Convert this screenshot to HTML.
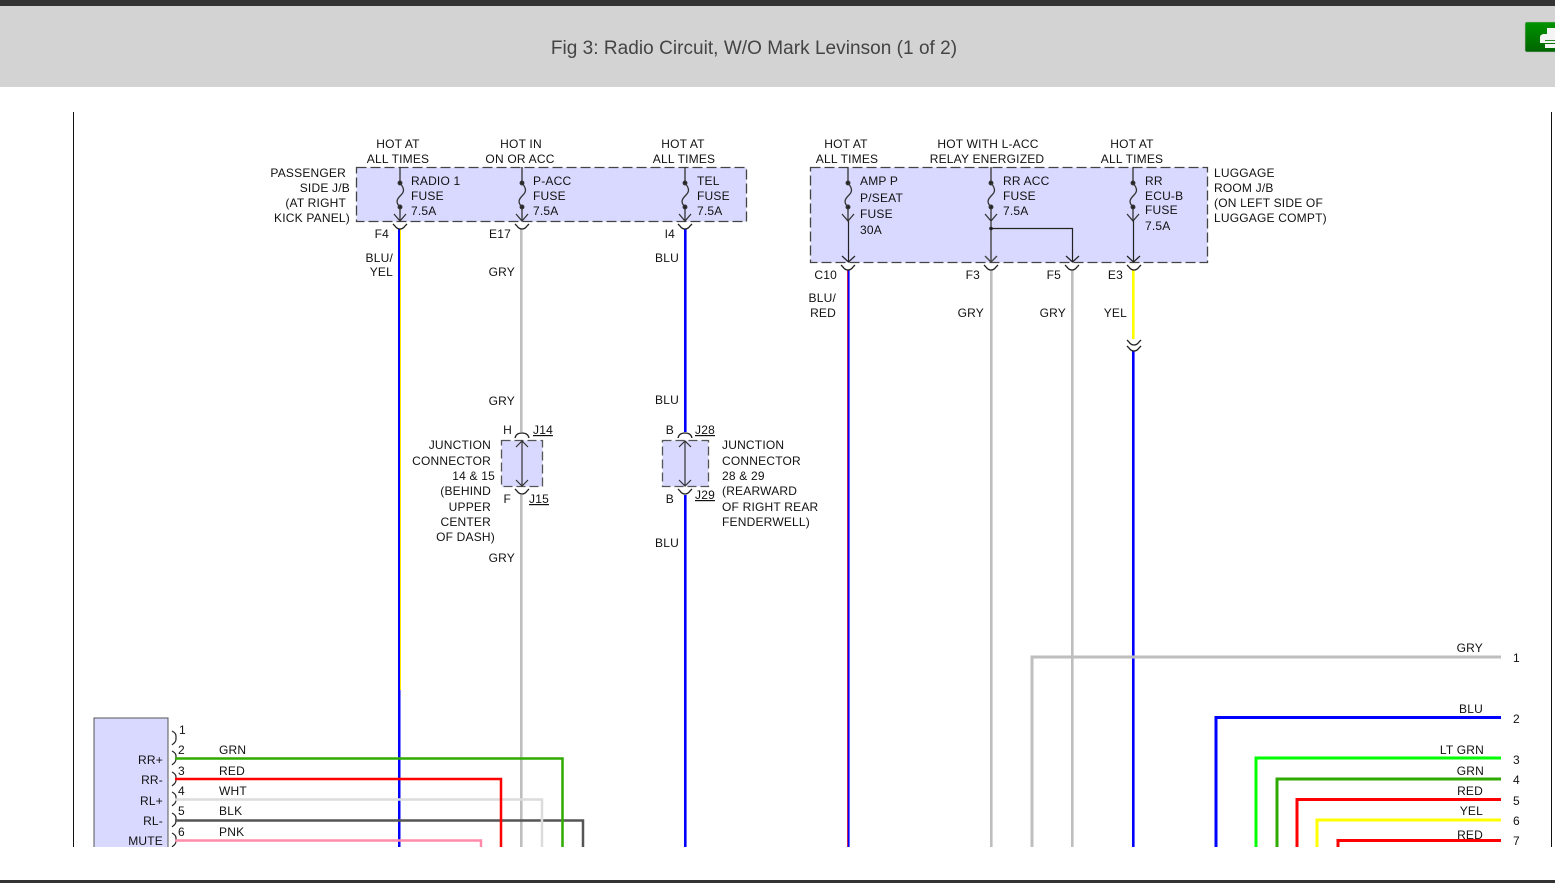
<!DOCTYPE html>
<html>
<head>
<meta charset="utf-8">
<style>
html,body{margin:0;padding:0;background:#fff;width:1555px;height:883px;overflow:hidden}
svg{position:absolute;left:0;top:0}
text{font-family:"Liberation Sans",sans-serif;font-size:12px;fill:#111;letter-spacing:.2px}
.m{text-anchor:middle}
.e{text-anchor:end}
</style>
</head>
<body>
<svg width="1555" height="883" viewBox="0 0 1555 883">
<defs>
<linearGradient id="g" x1="0" y1="0" x2="0" y2="1"><stop offset="0" stop-color="#009400"/><stop offset="1" stop-color="#006400"/></linearGradient>
<clipPath id="c"><rect x="0" y="100" width="1555" height="747"/></clipPath>
<g id="fuse" fill="none" stroke="#333" stroke-width="1.300">
<path d="M0 167V183M0 207V221"/>
<circle cx="0" cy="183" r="1.800" fill="#222"/><circle cx="0" cy="207" r="1.800" fill="#222"/>
<path d="M0 183C5 189 4 192 1 195C-3 199 -5 202 0 207"/>
<path d="M-6 214L0 221L6 214"/>
</g>
<path id="cup" d="M-7 0L-5 2Q-3 5 0 5Q3 5 5 2L7 0" fill="none" stroke="#222" stroke-width="1.300"/>
<path id="cap" d="M-7 5Q-6 0 0 0Q6 0 7 5" fill="none" stroke="#222" stroke-width="1.300"/>
<path id="pin" d="M0 0Q4 2 4 5V8Q4 11 1 13L0 14" fill="none" stroke="#222" stroke-width="1.200"/>
</defs>

<rect x="0" y="0" width="1555" height="6" fill="#333"/>
<rect x="0" y="6" width="1555" height="81" fill="#d3d3d3"/>
<text x="754" y="54" class="m" style="font-size:19px;fill:#444;letter-spacing:.04px">Fig 3: Radio Circuit, W/O Mark Levinson (1 of 2)</text>
<rect x="1525" y="22" width="34" height="30" rx="2" fill="url(#g)" stroke="#bbb" stroke-width="0.6"/>
<path d="M1547 28H1555V34H1547ZM1543 34H1555V43H1540V37Q1540 35 1543 34ZM1545 44H1555V48H1545Z" fill="#f4f4f4"/>
<rect x="1545" y="40" width="10" height="1" fill="#2a8a2a"/>
<rect x="0" y="880" width="1555" height="3" fill="#333"/>

<g clip-path="url(#c)">
<rect x="73" y="112" width="1" height="735" fill="#111"/>
<rect x="1551" y="112" width="1" height="735" fill="#111"/>

<rect x="356.500" y="167.500" width="390" height="54" fill="#d9d9ff" stroke="#444" stroke-width="1.300" stroke-dasharray="10 4"/>
<rect x="810.500" y="167.500" width="397" height="95" fill="#d9d9ff" stroke="#444" stroke-width="1.300" stroke-dasharray="10 4"/>
<rect x="501.500" y="440.500" width="41" height="46" fill="#d9d9ff" stroke="#555" stroke-width="1.300" stroke-dasharray="9 4"/>
<rect x="662.500" y="440.500" width="46" height="46" fill="#d9d9ff" stroke="#555" stroke-width="1.300" stroke-dasharray="9 4"/>
<rect x="94" y="718" width="74" height="140" fill="#d9d9ff" stroke="#555" stroke-width="1"/>

<!-- vertical wires -->
<rect x="398" y="229" width="2.500" height="618" fill="#0000ff"/>
<rect x="400" y="229" width="1" height="461" fill="#ffe800"/>
<rect x="520" y="229" width="2.600" height="203" fill="#bebebe"/>
<rect x="520" y="495" width="2.600" height="352" fill="#bebebe"/>
<rect x="684" y="229" width="2.600" height="203" fill="#0000ff"/>
<rect x="684" y="495" width="2.600" height="352" fill="#0000ff"/>
<rect x="847" y="270" width="2.600" height="577" fill="#0000ff"/>
<rect x="847" y="270" width="1" height="577" fill="#c8205c"/>
<rect x="990" y="270" width="2.600" height="577" fill="#bebebe"/>
<rect x="1071" y="270" width="2.600" height="577" fill="#bebebe"/>
<rect x="1132" y="270" width="2.600" height="69" fill="#ffff00"/>
<rect x="1132" y="351" width="2.600" height="496" fill="#0000ff"/>

<!-- fuses -->
<use href="#fuse" x="400"/>
<use href="#fuse" x="522"/>
<use href="#fuse" x="685"/>
<use href="#fuse" x="848"/>
<use href="#fuse" x="991"/>
<use href="#fuse" x="1133"/>
<g fill="none" stroke="#222" stroke-width="1.200">
<path d="M848.500 221V262M842 256L848.500 262L855 256"/>
<path d="M991 221V262M985 256L991 262L997 256" stroke="#444" stroke-width="1.400"/>
<path d="M1133.500 221V262M1127 256L1133.500 262L1140 256"/>
<path d="M991 228.500H1072.500V262M1066 256L1072.500 262L1079 256"/>
<path d="M522 441V486M516 447L522 441L528 447M516 480L522 486L528 480" stroke="#333"/>
<path d="M685 441V486M679 447L685 441L691 447M679 480L685 486L691 480" stroke="#333"/>
</g>
<circle cx="991" cy="228.500" r="1.800" fill="#222"/>

<!-- connector cups -->
<use href="#cup" x="400" y="224"/>
<use href="#cup" x="522" y="224"/>
<use href="#cup" x="685" y="224"/>
<use href="#cup" x="848" y="265"/>
<use href="#cup" x="991" y="265"/>
<use href="#cup" x="1072" y="265"/>
<use href="#cup" x="1134" y="265"/>
<use href="#cup" x="1134" y="340"/>
<use href="#cup" x="1134" y="346"/>
<use href="#cap" x="522" y="433"/>
<use href="#cap" x="685" y="433"/>
<use href="#cup" x="522" y="489"/>
<use href="#cup" x="685" y="489"/>
<use href="#pin" x="172" y="731"/>
<use href="#pin" x="172" y="751"/>
<use href="#pin" x="172" y="772"/>
<use href="#pin" x="172" y="792"/>
<use href="#pin" x="172" y="813"/>
<use href="#pin" x="172" y="833"/>

<!-- left harness -->
<g fill="none" stroke-width="2.500">
<path d="M175 840.500H481V847" stroke="#ff8aaa"/>
<path d="M175 820.500H583V847" stroke="#555"/>
<path d="M175 799.500H542V847" stroke="#dcdcdc"/>
<path d="M175 779H501V847" stroke="#ff0000"/>
<path d="M175 758.500H562.500V847" stroke="#2eaa00"/>
</g>

<!-- right harness -->
<g fill="none" stroke-width="3">
<path d="M1032 847V657H1501" stroke="#bebebe"/>
<path d="M1216 847V717.500H1501" stroke="#0000ff"/>
<path d="M1256 847V758H1501" stroke="#00ff00"/>
<path d="M1277 847V779H1501" stroke="#2eaa00"/>
<path d="M1297 847V799.500H1501" stroke="#ff0000"/>
<path d="M1317 847V820H1501" stroke="#ffff00"/>
<path d="M1338 847V840.500H1501" stroke="#ff0000"/>
</g>

<!-- labels -->
<text x="398" y="148" class="m">HOT AT</text><text x="398" y="163" class="m">ALL TIMES</text>
<text x="521" y="148" class="m">HOT IN</text><text x="520" y="163" class="m">ON OR ACC</text>
<text x="683" y="148" class="m">HOT AT</text><text x="684" y="163" class="m">ALL TIMES</text>
<text x="846" y="148" class="m">HOT AT</text><text x="847" y="163" class="m">ALL TIMES</text>
<text x="988" y="148" class="m">HOT WITH L-ACC</text><text x="987" y="163" class="m">RELAY ENERGIZED</text>
<text x="1132" y="148" class="m">HOT AT</text><text x="1132" y="163" class="m">ALL TIMES</text>

<text x="346" y="177" class="e">PASSENGER</text>
<text x="350" y="192" class="e">SIDE J/B</text>
<text x="346" y="207" class="e">(AT RIGHT</text>
<text x="350" y="222" class="e">KICK PANEL)</text>

<text x="411" y="185">RADIO 1</text><text x="411" y="200">FUSE</text><text x="411" y="215">7.5A</text>
<text x="533" y="185">P-ACC</text><text x="533" y="200">FUSE</text><text x="533" y="215">7.5A</text>
<text x="697" y="185">TEL</text><text x="697" y="200">FUSE</text><text x="697" y="215">7.5A</text>
<text x="860" y="185">AMP P</text><text x="860" y="202">P/SEAT</text><text x="860" y="218">FUSE</text><text x="860" y="234">30A</text>
<text x="1003" y="185">RR ACC</text><text x="1003" y="200">FUSE</text><text x="1003" y="215">7.5A</text>
<text x="1145" y="185">RR</text><text x="1145" y="200">ECU-B</text><text x="1145" y="214">FUSE</text><text x="1145" y="230">7.5A</text>

<text x="1214" y="177">LUGGAGE</text><text x="1214" y="192">ROOM J/B</text><text x="1214" y="207">(ON LEFT SIDE OF</text><text x="1214" y="222">LUGGAGE COMPT)</text>

<text x="389" y="238" class="e">F4</text>
<text x="511" y="238" class="e">E17</text>
<text x="675" y="238" class="e">I4</text>
<text x="837" y="279" class="e">C10</text>
<text x="980" y="279" class="e">F3</text>
<text x="1061" y="279" class="e">F5</text>
<text x="1123" y="279" class="e">E3</text>

<text x="393" y="262" class="e">BLU/</text><text x="393" y="276" class="e">YEL</text>
<text x="515" y="276" class="e">GRY</text>
<text x="679" y="262" class="e">BLU</text>
<text x="836" y="302" class="e">BLU/</text><text x="836" y="317" class="e">RED</text>
<text x="984" y="317" class="e">GRY</text>
<text x="1066" y="317" class="e">GRY</text>
<text x="1127" y="317" class="e">YEL</text>

<text x="515" y="405" class="e">GRY</text>
<text x="679" y="404" class="e">BLU</text>
<text x="515" y="562" class="e">GRY</text>
<text x="679" y="547" class="e">BLU</text>

<text x="512" y="434" class="e">H</text>
<text x="533" y="434" text-decoration="underline">J14</text>
<text x="511" y="503" class="e">F</text>
<text x="529" y="503" text-decoration="underline">J15</text>
<text x="674" y="434" class="e">B</text>
<text x="695" y="434" text-decoration="underline">J28</text>
<text x="674" y="503" class="e">B</text>
<text x="695" y="499" text-decoration="underline">J29</text>

<text x="491" y="449" class="e">JUNCTION</text>
<text x="491" y="465" class="e">CONNECTOR</text>
<text x="495" y="480" class="e">14 &amp; 15</text>
<text x="491" y="495" class="e">(BEHIND</text>
<text x="491" y="511" class="e">UPPER</text>
<text x="491" y="526" class="e">CENTER</text>
<text x="495" y="541" class="e">OF DASH)</text>

<text x="722" y="449">JUNCTION</text>
<text x="722" y="465">CONNECTOR</text>
<text x="722" y="480">28 &amp; 29</text>
<text x="722" y="495">(REARWARD</text>
<text x="722" y="511">OF RIGHT REAR</text>
<text x="722" y="526">FENDERWELL)</text>

<text x="163" y="764" class="e">RR+</text>
<text x="163" y="784" class="e">RR-</text>
<text x="163" y="805" class="e">RL+</text>
<text x="163" y="825" class="e">RL-</text>
<text x="163" y="845" class="e">MUTE</text>

<text x="179" y="734">1</text><text x="178" y="754">2</text><text x="178" y="775">3</text><text x="178" y="795">4</text><text x="178" y="815">5</text><text x="178" y="836">6</text>
<text x="219" y="754">GRN</text><text x="219" y="775">RED</text><text x="219" y="795">WHT</text><text x="219" y="815">BLK</text><text x="219" y="836">PNK</text>

<text x="1483" y="652" class="e">GRY</text>
<text x="1483" y="713" class="e">BLU</text>
<text x="1484" y="754" class="e">LT GRN</text>
<text x="1484" y="775" class="e">GRN</text>
<text x="1483" y="795" class="e">RED</text>
<text x="1483" y="815" class="e">YEL</text>
<text x="1483" y="839" class="e">RED</text>
<text x="1513" y="662">1</text><text x="1513" y="723">2</text><text x="1513" y="764">3</text><text x="1513" y="784">4</text><text x="1513" y="805">5</text><text x="1513" y="825">6</text><text x="1513" y="845">7</text>
</g>
</svg>
</body>
</html>
